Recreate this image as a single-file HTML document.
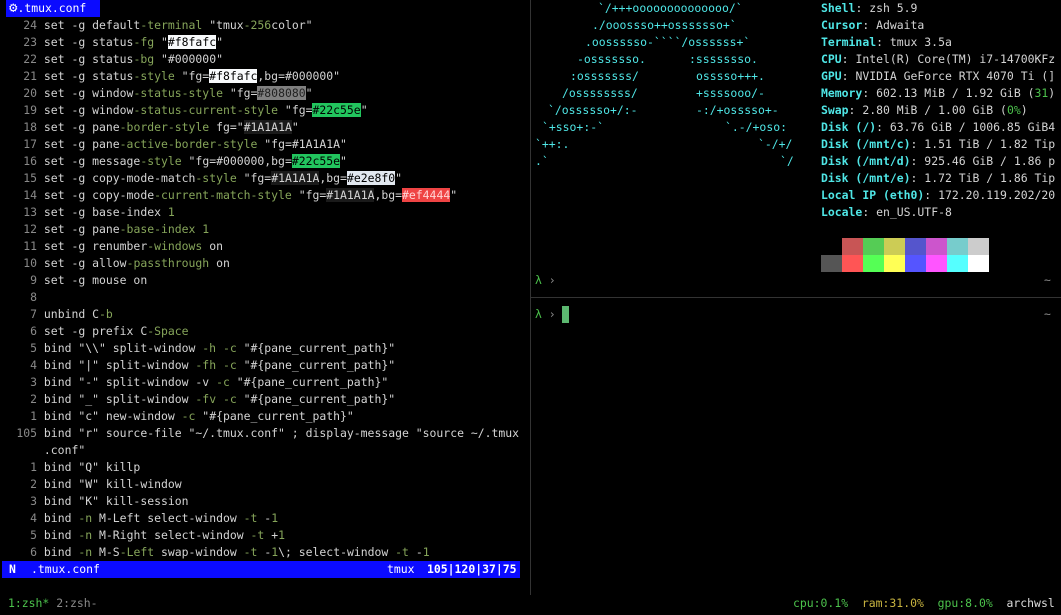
<!DOCTYPE html>
<html><head><meta charset="utf-8"><style>
html,body{margin:0;padding:0;background:#000;width:1061px;height:615px;overflow:hidden}
body{position:relative;font-family:"DejaVu Sans Mono","Liberation Mono",monospace;font-size:11.45px;color:#d4d4d4}
.l{position:absolute;height:17px;line-height:17px;white-space:pre}
.g{color:#86a55a}.n{color:#8a8a8a}
.c{color:#4fe6e6}.k{color:#4fe6e6;font-weight:bold}
.hw{background:#f8fafc;color:#000}.hg{background:#808080;color:#222}.hn{background:#22c55e;color:#000}
.hd{background:#1a1a1a}.he{background:#e2e8f0;color:#000}.hr{background:#ef4444;color:#ffd6d6}
.gr{color:#4cc24c}
.b{font-weight:bold}
</style></head><body>
<div style="position:absolute;left:6px;top:0;width:94px;height:17px;background:#0b0bff"></div>
<div class="l" style="left:9px;top:0;color:#fff"><span style="font-size:14px">⚙</span><span>.tmux.conf</span></div>
<div class="l" style="left:2.6px;top:17px"><span class="n">   24</span> set -g default<span class="g">-terminal</span> "tmux<span class="g">-256</span>color"</div>
<div class="l" style="left:2.6px;top:34px"><span class="n">   23</span> set -g status<span class="g">-fg</span> "<span class="hw">#f8fafc</span>"</div>
<div class="l" style="left:2.6px;top:51px"><span class="n">   22</span> set -g status<span class="g">-bg</span> "#000000"</div>
<div class="l" style="left:2.6px;top:68px"><span class="n">   21</span> set -g status<span class="g">-style</span> "fg=<span class="hw">#f8fafc</span>,bg=#000000"</div>
<div class="l" style="left:2.6px;top:85px"><span class="n">   20</span> set -g window<span class="g">-status-style</span> "fg=<span class="hg">#808080</span>"</div>
<div class="l" style="left:2.6px;top:102px"><span class="n">   19</span> set -g window<span class="g">-status-current-style</span> "fg=<span class="hn">#22c55e</span>"</div>
<div class="l" style="left:2.6px;top:119px"><span class="n">   18</span> set -g pane<span class="g">-border-style</span> fg="<span class="hd">#1A1A1A</span>"</div>
<div class="l" style="left:2.6px;top:136px"><span class="n">   17</span> set -g pane<span class="g">-active-border-style</span> "fg=#1A1A1A"</div>
<div class="l" style="left:2.6px;top:153px"><span class="n">   16</span> set -g message<span class="g">-style</span> "fg=#000000,bg=<span class="hn">#22c55e</span>"</div>
<div class="l" style="left:2.6px;top:170px"><span class="n">   15</span> set -g copy-mode-match<span class="g">-style</span> "fg=<span class="hd">#1A1A1A</span>,bg=<span class="he">#e2e8f0</span>"</div>
<div class="l" style="left:2.6px;top:187px"><span class="n">   14</span> set -g copy-mode<span class="g">-current-match-style</span> "fg=<span class="hd">#1A1A1A</span>,bg=<span class="hr">#ef4444</span>"</div>
<div class="l" style="left:2.6px;top:204px"><span class="n">   13</span> set -g base-index <span class="g">1</span></div>
<div class="l" style="left:2.6px;top:221px"><span class="n">   12</span> set -g pane<span class="g">-base-index 1</span></div>
<div class="l" style="left:2.6px;top:238px"><span class="n">   11</span> set -g renumber<span class="g">-windows</span> on</div>
<div class="l" style="left:2.6px;top:255px"><span class="n">   10</span> set -g allow<span class="g">-passthrough</span> on</div>
<div class="l" style="left:2.6px;top:272px"><span class="n">    9</span> set -g mouse on</div>
<div class="l" style="left:2.6px;top:289px"><span class="n">    8</span></div>
<div class="l" style="left:2.6px;top:306px"><span class="n">    7</span> unbind C<span class="g">-b</span></div>
<div class="l" style="left:2.6px;top:323px"><span class="n">    6</span> set -g prefix C<span class="g">-Space</span></div>
<div class="l" style="left:2.6px;top:340px"><span class="n">    5</span> bind "\\" split-window <span class="g">-h -c</span> "#{pane_current_path}"</div>
<div class="l" style="left:2.6px;top:357px"><span class="n">    4</span> bind "|" split-window <span class="g">-fh -c</span> "#{pane_current_path}"</div>
<div class="l" style="left:2.6px;top:374px"><span class="n">    3</span> bind "-" split-window -v <span class="g">-c</span> "#{pane_current_path}"</div>
<div class="l" style="left:2.6px;top:391px"><span class="n">    2</span> bind "_" split-window <span class="g">-fv -c</span> "#{pane_current_path}"</div>
<div class="l" style="left:2.6px;top:408px"><span class="n">    1</span> bind "c" new-window <span class="g">-c</span> "#{pane_current_path}"</div>
<div class="l" style="left:2.6px;top:425px"><span class="n">  105</span> bind "r" source-file "~/.tmux.conf" ; display-message "source ~/.tmux</div>
<div class="l" style="left:2.6px;top:442px">      .conf"</div>
<div class="l" style="left:2.6px;top:459px"><span class="n">    1</span> bind "Q" killp</div>
<div class="l" style="left:2.6px;top:476px"><span class="n">    2</span> bind "W" kill-window</div>
<div class="l" style="left:2.6px;top:493px"><span class="n">    3</span> bind "K" kill-session</div>
<div class="l" style="left:2.6px;top:510px"><span class="n">    4</span> bind <span class="g">-n</span> M-Left select-window <span class="g">-t</span> -<span class="g">1</span></div>
<div class="l" style="left:2.6px;top:527px"><span class="n">    5</span> bind <span class="g">-n</span> M-Right select-window <span class="g">-t</span> +<span class="g">1</span></div>
<div class="l" style="left:2.6px;top:544px"><span class="n">    6</span> bind <span class="g">-n</span> M-S<span class="g">-Left</span> swap-window <span class="g">-t</span> -<span class="g">1</span>\; select-window <span class="g">-t</span> -<span class="g">1</span></div>
<div style="position:absolute;left:2px;top:561px;width:518px;height:17px;background:#0b0bff"></div>
<div class="l b" style="left:9px;top:561px;color:#fff">N</div>
<div class="l" style="left:31px;top:561px;color:#fff">.tmux.conf</div>
<div class="l" style="left:387px;top:561px;color:#fff">tmux</div>
<div class="l b" style="left:427px;top:561px;color:#fff">105|120|37|75</div>
<div style="position:absolute;left:530px;top:0;width:1px;height:595px;background:#333"></div>
<div style="position:absolute;left:531px;top:297px;width:530px;height:1px;background:#333"></div>
<div class="l c" style="left:598px;top:0">&#96;/+++oooooooooooooo/&#96;</div>
<div class="l c" style="left:592px;top:17px">./ooossso++osssssso+&#96;</div>
<div class="l c" style="left:585px;top:34px">.oossssso-&#96;&#96;&#96;&#96;/ossssss+&#96;</div>
<div class="l c" style="left:577px;top:51px">-osssssso.</div><div class="l c" style="left:689px;top:51px">:ssssssso.</div>
<div class="l c" style="left:570px;top:68px">:osssssss/</div><div class="l c" style="left:696px;top:68px">osssso+++.</div>
<div class="l c" style="left:562px;top:85px">/ossssssss/</div><div class="l c" style="left:696px;top:85px">+ssssooo/-</div>
<div class="l c" style="left:548px;top:102px">&#96;/ossssso+/:-</div><div class="l c" style="left:696px;top:102px">-:/+osssso+-</div>
<div class="l c" style="left:542px;top:119px">&#96;+sso+:-&#96;</div><div class="l c" style="left:725px;top:119px">&#96;.-/+oso:</div>
<div class="l c" style="left:535px;top:136px">&#96;++:.</div><div class="l c" style="left:758px;top:136px">&#96;-/+/</div>
<div class="l c" style="left:535px;top:153px">.&#96;</div><div class="l c" style="left:780px;top:153px">&#96;/</div>
<div class="l" style="left:821px;top:0"><span class="k">Shell</span>: zsh 5.9</div>
<div class="l" style="left:821px;top:17px"><span class="k">Cursor</span>: Adwaita</div>
<div class="l" style="left:821px;top:34px"><span class="k">Terminal</span>: tmux 3.5a</div>
<div class="l" style="left:821px;top:51px"><span class="k">CPU</span>: Intel(R) Core(TM) i7-14700KFz</div>
<div class="l" style="left:821px;top:68px"><span class="k">GPU</span>: NVIDIA GeForce RTX 4070 Ti (]</div>
<div class="l" style="left:821px;top:85px"><span class="k">Memory</span>: 602.13 MiB / 1.92 GiB (<span class="gr">31</span>)</div>
<div class="l" style="left:821px;top:102px"><span class="k">Swap</span>: 2.80 MiB / 1.00 GiB (<span class="gr">0%</span>)</div>
<div class="l" style="left:821px;top:119px"><span class="k">Disk (/)</span>: 63.76 GiB / 1006.85 GiB4</div>
<div class="l" style="left:821px;top:136px"><span class="k">Disk (/mnt/c)</span>: 1.51 TiB / 1.82 Tip</div>
<div class="l" style="left:821px;top:153px"><span class="k">Disk (/mnt/d)</span>: 925.46 GiB / 1.86 p</div>
<div class="l" style="left:821px;top:170px"><span class="k">Disk (/mnt/e)</span>: 1.72 TiB / 1.86 Tip</div>
<div class="l" style="left:821px;top:187px"><span class="k">Local IP (eth0)</span>: 172.20.119.202/20</div>
<div class="l" style="left:821px;top:204px"><span class="k">Locale</span>: en_US.UTF-8</div>
<div style="position:absolute;left:842px;top:238px;height:17px;display:flex">
<div style="width:21px;background:#c85555"></div><div style="width:21px;background:#55cc55"></div><div style="width:21px;background:#cccc55"></div><div style="width:21px;background:#5555cc"></div><div style="width:21px;background:#cc55cc"></div><div style="width:21px;background:#77cccc"></div><div style="width:21px;background:#cccccc"></div></div>
<div style="position:absolute;left:821px;top:255px;height:17px;display:flex">
<div style="width:21px;background:#555"></div><div style="width:21px;background:#ff5555"></div><div style="width:21px;background:#55ff55"></div><div style="width:21px;background:#ffff55"></div><div style="width:21px;background:#5555ff"></div><div style="width:21px;background:#ff55ff"></div><div style="width:21px;background:#55ffff"></div><div style="width:21px;background:#fff"></div></div>
<div class="l" style="left:535px;top:272px"><span class="gr">λ</span> <span class="n">›</span></div>
<div class="l n" style="left:1044px;top:272px">~</div>
<div class="l" style="left:535px;top:306px"><span class="gr">λ</span> <span class="n">›</span></div>
<div class="l n" style="left:1044px;top:306px">~</div>
<div style="position:absolute;left:562px;top:306px;width:7px;height:17px;background:#5cb870"></div>
<div class="l" style="left:8px;top:595px"><span class="gr">1:zsh*</span> <span class="n">2:zsh-</span></div>
<div class="l" style="left:793px;top:595px"><span class="gr">cpu:0.1%</span>  <span style="color:#c8b440">ram:31.0%</span>  <span class="gr">gpu:8.0%</span>  <span style="color:#ddd">archwsl</span></div>
</body></html>
